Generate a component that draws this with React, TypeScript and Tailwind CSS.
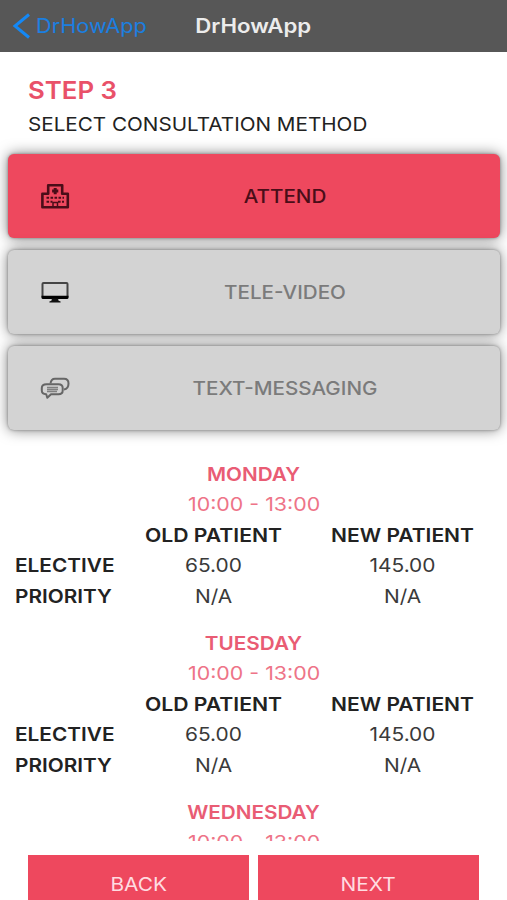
import type { ReactNode } from 'react';

type Method = {
  label: string;
  icon: ReactNode;
  selected?: boolean;
};

type Fee = {
  type: string;
  oldPatient: string;
  newPatient: string;
};

type Day = {
  name: string;
  hours: string;
  fees: Fee[];
};

function HospitalIcon() {
  return (
    <svg width="30" height="28" viewBox="0 0 30 28" fill="none" stroke="#4a0d18" strokeWidth="2">
      <path d="M2.400 25.200V11.800h5.800V3.300h14v8.500h5.600v13.400z" strokeLinejoin="round" strokeWidth="2.600" />
      <path d="M15.200 6v6.200M12.100 9.100h6.200" strokeWidth="3" />
      <path d="M6.500 15.800h17.500M6.500 19.800h6M18 19.800h6" strokeWidth="1.900" strokeDasharray="2.600 1.400" />
      <path d="M13 25v-4.500h4.500V25" strokeWidth="1.500" />
    </svg>
  );
}

function MonitorIcon() {
  return (
    <svg width="30" height="28" viewBox="0 0 30 28" fill="none">
      <rect x="2.500" y="5" width="25" height="14.500" rx="1" stroke="#444" strokeWidth="2" />
      <path d="M1.500 17.800h27v1.700a1.500 1.500 0 0 1-1.500 1.500H3a1.500 1.500 0 0 1-1.500-1.500z" fill="#000" />
      <path d="M12 20.500h6l.6 2.200 2 .7v1H9.400v-1l2-.7z" fill="#111" />
    </svg>
  );
}

function ChatIcon() {
  return (
    <svg width="30" height="28" viewBox="0 0 30 28" fill="none" stroke="#666" strokeWidth="2" strokeLinejoin="round">
      <path d="M10.500 9.500c.4-3.200 1.800-4.700 4.500-4.700h9c3 0 4.500 1.500 4.500 4.700 0 3.500-1 5.500-4.500 6" />
      <path d="M6.500 10.300h12c2.800 0 4.200 1.300 4.200 3.700v2.500c0 2.500-1.400 3.800-4.200 3.800H11l-3.700 3.500-1.100-3.500c-2.900-.2-4.400-1.500-4.400-3.800V14c0-2.400 1.600-3.700 4.700-3.700z" />
      <path d="M7 13.500h11M7 15.500h11M7 17.500h10" stroke="#808080" strokeWidth="1.600" />
    </svg>
  );
}

const methods: Method[] = [
  { label: 'ATTEND', icon: <HospitalIcon />, selected: true },
  { label: 'TELE-VIDEO', icon: <MonitorIcon /> },
  { label: 'TEXT-MESSAGING', icon: <ChatIcon /> },
];

const fees: Fee[] = [
  { type: 'ELECTIVE', oldPatient: '65.00', newPatient: '145.00' },
  { type: 'PRIORITY', oldPatient: 'N/A', newPatient: 'N/A' },
];

const days: Day[] = [
  { name: 'MONDAY', hours: '10:00 - 13:00', fees },
  { name: 'TUESDAY', hours: '10:00 - 13:00', fees },
  { name: 'WEDNESDAY', hours: '10:00 - 13:00', fees: [] },
];

function MethodCard({ label, icon, selected }: Method) {
  return (
    <button
      className={`flex h-[84px] w-full shrink-0 items-center rounded-md pl-8 shadow-[0_0_3px_rgba(0,0,0,0.35),0_0_14px_rgba(0,0,0,0.5)] ${
        selected ? 'bg-[#ee485e] text-[#4a0d18]' : 'bg-[#d3d3d3] text-[#7b7b7b]'
      }`}
    >
      {icon}
      <span className="flex-1 scale-x-[1.085] pt-[3px] text-center font-[450]">{label}</span>
    </button>
  );
}

function DaySchedule({ name, hours, fees }: Day) {
  return (
    <section className="mb-[17px] leading-[30.4px]">
      <h2 className="scale-x-[1.09] text-center font-semibold text-[#e95c74]">{name}</h2>
      <p className="scale-x-[1.125] pl-px text-center text-[#ee7488]">{hours}</p>
      {fees.length > 0 && (
        <div className="grid grid-cols-[104px_189px_189px] pl-[15px]">
          <span />
          <span className="scale-x-[1.115] text-center font-semibold">OLD PATIENT</span>
          <span className="scale-x-[1.105] text-center font-semibold">NEW PATIENT</span>
        </div>
      )}
      {fees.map((fee) => (
        <div key={fee.type} className="grid grid-cols-[104px_189px_189px] pl-[15px]">
          <span className="origin-left scale-x-[1.095] font-semibold">{fee.type}</span>
          <span className="scale-x-[1.1] text-center text-[#3a3a3a]">{fee.oldPatient}</span>
          <span className="scale-x-[1.1] text-center text-[#3a3a3a]">{fee.newPatient}</span>
        </div>
      ))}
    </section>
  );
}

export default function App() {
  return (
    <div className="flex h-[900px] w-[507px] flex-col overflow-hidden bg-white font-['Inter',sans-serif] text-[19px] text-[#222]">
      <header className="grid h-[52px] shrink-0 grid-cols-[1fr_auto_1fr] items-center bg-[#575757] px-3">
        <a className="flex items-center gap-[5px] text-[20px] text-[#1b7fe0]">
          <svg width="19" height="26" viewBox="0 0 19 26" fill="none" stroke="#1488f5" strokeWidth="3">
            <path d="M17 1.500 3 13l14 11.500" />
          </svg>
          <span className="origin-left scale-x-[1.085]">DrHowApp</span>
        </a>
        <h1 className="scale-x-[1.11] text-[20px] font-semibold text-[#ececec]">DrHowApp</h1>
      </header>

      <div className="shrink-0 px-7 pt-[23px]">
        <h2 className="origin-left scale-x-[1.075] text-[24px] leading-8 font-semibold text-[#e95169]">STEP 3</h2>
        <p className="origin-left scale-x-[1.087] pt-px leading-[34px]">SELECT CONSULTATION METHOD</p>
      </div>

      <div className="mt-3 flex shrink-0 flex-col gap-3 pr-[7px] pl-2">
        {methods.map((method) => (
          <MethodCard key={method.label} {...method} />
        ))}
      </div>

      <main className="mt-[29px] h-[382px] shrink-0 overflow-hidden pt-px">
        {days.map((day) => (
          <DaySchedule key={day.name} {...day} />
        ))}
      </main>

      <footer className="mt-[14px] flex shrink-0 gap-[9px] px-7 text-[#ffdce1]">
        <button className="h-[59px] flex-1 bg-[#ee485e]">
          <span className="inline-block scale-x-[1.1] pt-0.5">BACK</span>
        </button>
        <button className="h-[59px] flex-1 bg-[#ee485e]">
          <span className="inline-block scale-x-[1.1] pt-0.5">NEXT</span>
        </button>
      </footer>
    </div>
  );
}
